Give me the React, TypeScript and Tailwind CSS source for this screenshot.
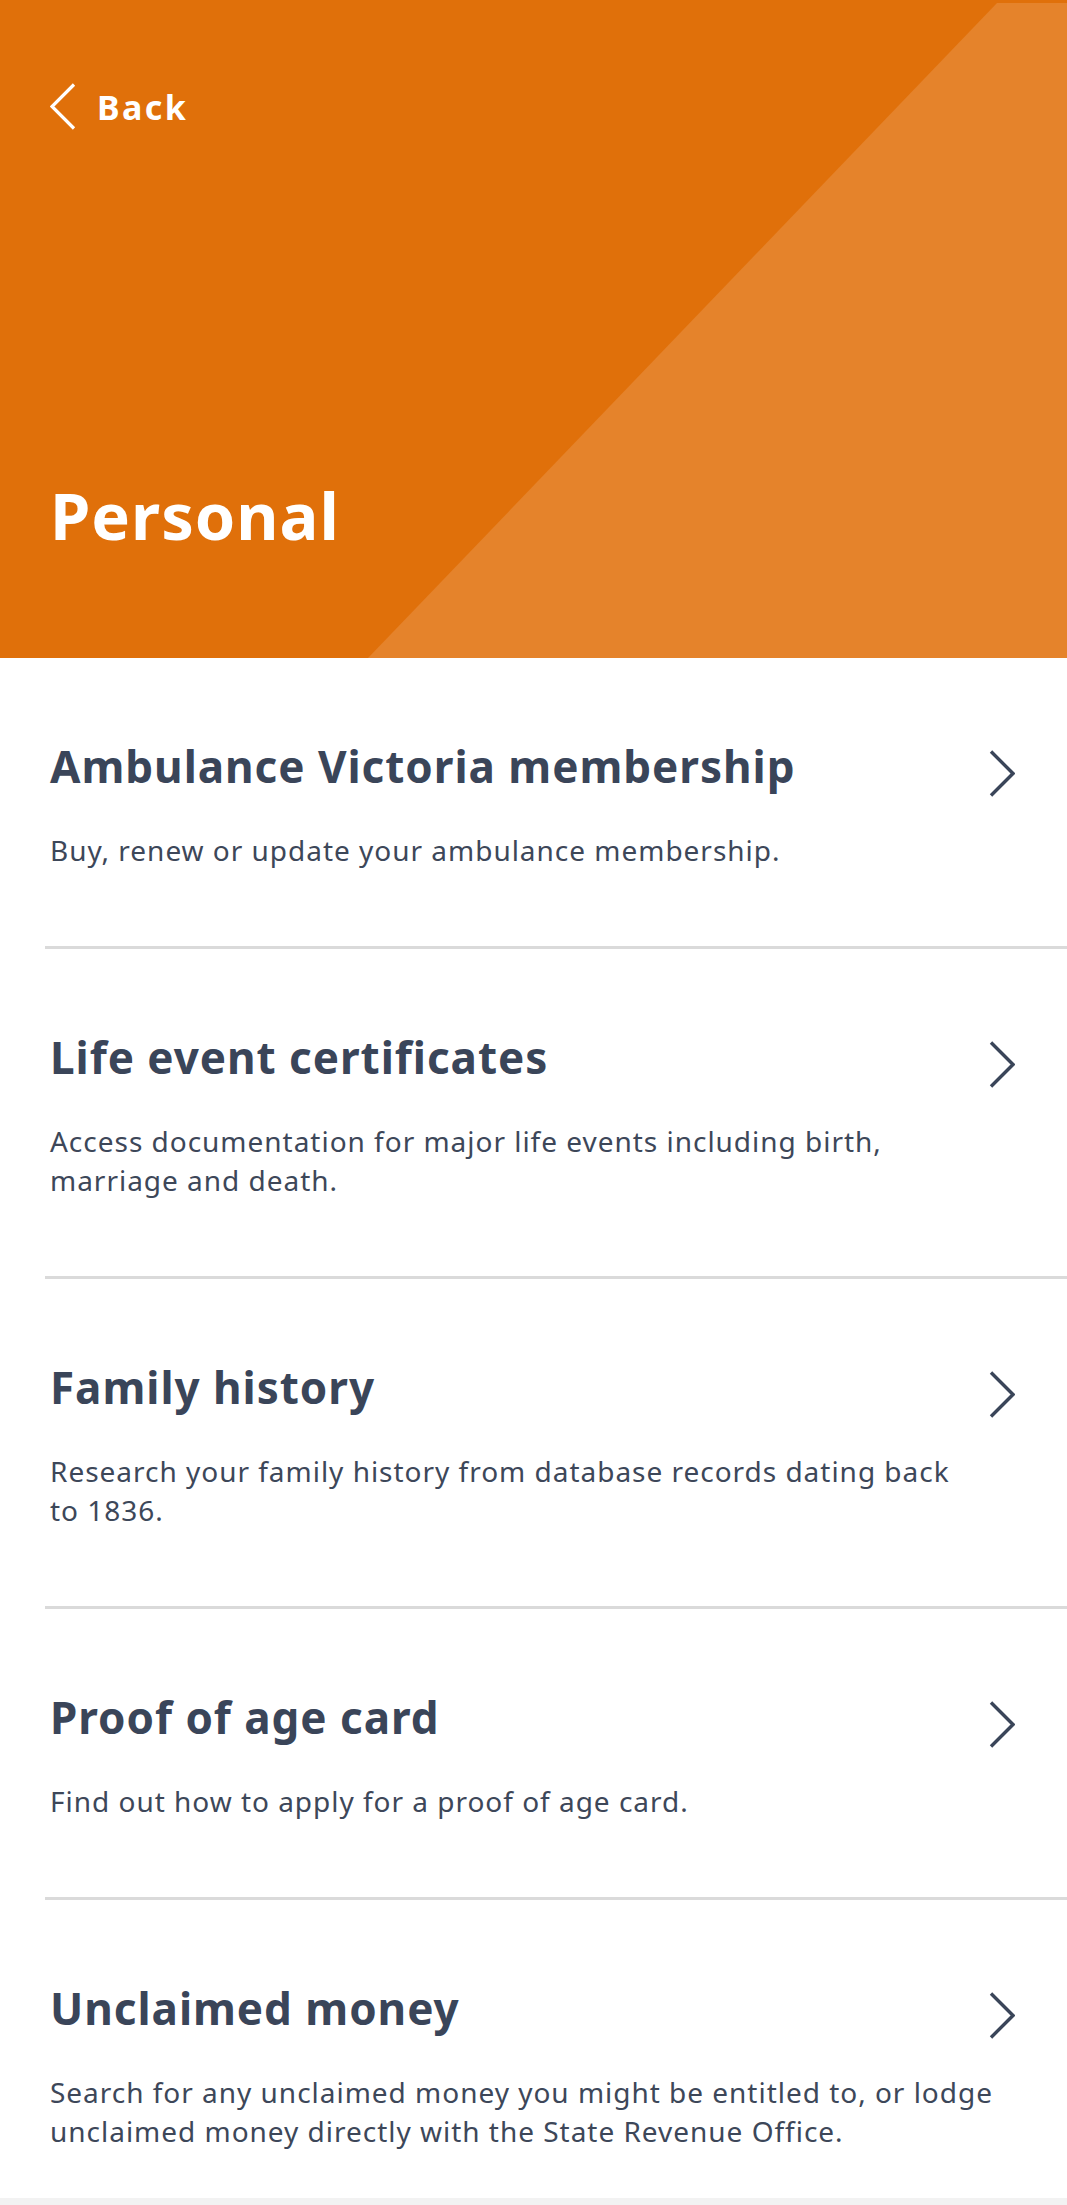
const items = [
  {
    title: "Ambulance Victoria membership",
    lines: ["Buy, renew or update your ambulance membership."],
  },
  {
    title: "Life event certificates",
    lines: ["Access documentation for major life events including birth,", "marriage and death."],
  },
  {
    title: "Family history",
    lines: ["Research your family history from database records dating back", "to 1836."],
  },
  {
    title: "Proof of age card",
    lines: ["Find out how to apply for a proof of age card."],
  },
  {
    title: "Unclaimed money",
    lines: [
      "Search for any unclaimed money you might be entitled to, or lodge",
      "unclaimed money directly with the State Revenue Office.",
    ],
  },
];

function Chevron({ className }: { className?: string }) {
  return (
    <svg width="26" height="47" viewBox="0 0 26 47" fill="none" className={className}>
      <path d="M2 1.5 L24 23.5 L2 45.5" stroke="currentColor" strokeWidth="3.4" />
    </svg>
  );
}

export default function App() {
  return (
    <div className="min-h-screen bg-[#f2f2f2] font-['Noto_Sans',sans-serif]">
      <header className="relative h-[658px] overflow-hidden bg-[#e0700a] text-white">
        <svg
          className="absolute inset-0 h-full w-full"
          viewBox="0 0 1067 658"
          preserveAspectRatio="none"
        >
          <polygon points="997,3 1067,3 1067,658 368,658" fill="#e5832b" />
        </svg>
        <div className="relative flex h-full flex-col justify-between px-[50px] pb-[110px] pt-[83px]">
          <div className="flex items-center">
            <svg width="26" height="47" viewBox="0 0 26 47" fill="none">
              <path d="M24 1.5 L2 23.5 L24 45.5" stroke="white" strokeWidth="3.2" />
            </svg>
            <span className="ml-[21px] text-[34px] font-bold leading-none tracking-[0.07em]">Back</span>
          </div>
          <h1 className="text-[65px] font-bold leading-none tracking-[0.015em]">Personal</h1>
        </div>
      </header>

      <main className="bg-white">
        {items.map((item, i) => (
          <div
            key={i}
            className={
              i < items.length - 1
                ? "ml-[45px] border-b-[3px] border-[#dadada] pb-[76px] pl-[5px] pr-[50px] pt-[82px]"
                : "ml-[45px] pb-[47px] pl-[5px] pr-[50px] pt-[82px]"
            }
          >
            <div className="flex items-start justify-between">
              <h2 className="text-[44px] font-bold leading-[1.2] tracking-[0.022em] text-[#3a4559]">{item.title}</h2>
              <Chevron className="mr-[2px] mt-[10px] shrink-0 text-[#3a4559]" />
            </div>
            <p className="mt-[34px] text-[28px] leading-[39px] tracking-[0.035em] text-[#3d4759]">
              {item.lines.map((line, j) => (
                <span key={j} className="block whitespace-nowrap">
                  {line}
                </span>
              ))}
            </p>
          </div>
        ))}
      </main>
    </div>
  );
}
